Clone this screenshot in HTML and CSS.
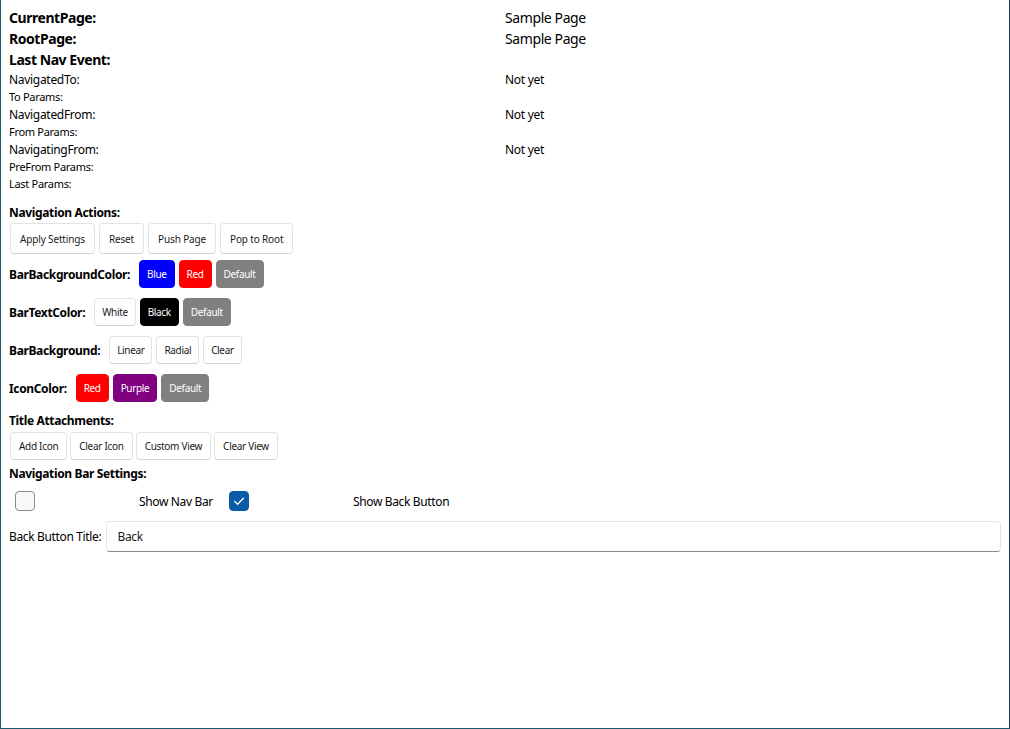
FILE: index.html
```html
<!DOCTYPE html>
<html lang="en">
<head>
<meta charset="utf-8">
<title>Navigation Page Sample</title>
<link rel="stylesheet" href="styles.css">
</head>
<body>
<div class="window">
  <div class="info">
    <div class="big bold">CurrentPage:</div><div class="big">Sample Page</div>
    <div class="big bold">RootPage:</div><div class="big">Sample Page</div>
    <div class="big bold">Last Nav Event:</div><div class="big"></div>
    <div class="mid">NavigatedTo:</div><div class="mid">Not yet</div>
    <div class="small">To Params:</div><div class="small"></div>
    <div class="mid">NavigatedFrom:</div><div class="mid">Not yet</div>
    <div class="small">From Params:</div><div class="small"></div>
    <div class="mid">NavigatingFrom:</div><div class="mid">Not yet</div>
    <div class="small">PreFrom Params:</div><div class="small"></div>
    <div class="small">Last Params:</div><div class="small"></div>
  </div>

  <div class="section-title first">Navigation Actions:</div>
  <div class="btn-row tall">
    <button class="btn">Apply Settings</button>
    <button class="btn">Reset</button>
    <button class="btn">Push Page</button>
    <button class="btn">Pop to Root</button>
  </div>

  <div class="opt-row r1">
    <span class="opt-label">BarBackgroundColor:</span>
    <button class="btn c-blue">Blue</button>
    <button class="btn c-red">Red</button>
    <button class="btn c-gray">Default</button>
  </div>
  <div class="opt-row">
    <span class="opt-label">BarTextColor:</span>
    <button class="btn">White</button>
    <button class="btn c-black">Black</button>
    <button class="btn c-gray">Default</button>
  </div>
  <div class="opt-row">
    <span class="opt-label">BarBackground:</span>
    <button class="btn">Linear</button>
    <button class="btn">Radial</button>
    <button class="btn">Clear</button>
  </div>
  <div class="opt-row">
    <span class="opt-label">IconColor:</span>
    <button class="btn c-red">Red</button>
    <button class="btn c-purple">Purple</button>
    <button class="btn c-gray">Default</button>
  </div>

  <div class="section-title t2">Title Attachments:</div>
  <div class="btn-row short">
    <button class="btn">Add Icon</button>
    <button class="btn">Clear Icon</button>
    <button class="btn">Custom View</button>
    <button class="btn">Clear View</button>
  </div>

  <div class="section-title t3">Navigation Bar Settings:</div>
  <div class="check-row">
    <div class="check-cell"><span class="box"></span></div>
    <span class="check-text">Show Nav Bar</span>
    <div class="check-cell"><span class="box checked"><svg viewBox="0 0 20 20" width="20" height="20"><path d="M5.6 10.4 L8.6 13.3 L14.4 7.2" fill="none" stroke="#fff" stroke-width="1.3" stroke-linecap="round" stroke-linejoin="round"/></svg></span></div>
    <span class="check-text">Show Back Button</span>
  </div>

  <div class="entry-row">
    <span class="entry-label">Back Button Title:</span>
    <div class="entry">Back</div>
  </div>
</div>
</body>
</html>
```

FILE: styles.css
```css
* { box-sizing: border-box; }
html, body { margin: 0; padding: 0; background: #ffffff; }
body {
  font-family: "Noto Sans", "Open Sans", sans-serif;
  color: #000;
}
.window {
  width: 1010px;
  height: 729px;
  border-left: 1px solid #1b5a70;
  border-right: 1px solid #1c3d5e;
  border-bottom: 1px solid #1b5a70;
  padding: 7px 8px 0 8px;
  overflow: hidden;
}
.info {
  display: grid;
  grid-template-columns: 1fr 1fr;
}
.big { font-size: 14px; line-height: 21px; height: 21px; letter-spacing: -0.4px; }
.bold { font-weight: 700; letter-spacing: -0.45px; }
.mid { font-size: 12px; line-height: 18px; height: 18px; letter-spacing: -0.3px; padding-top: 1px; }
.small { font-size: 11px; line-height: 17px; height: 17px; letter-spacing: -0.3px; }

.section-title {
  font-size: 12px;
  font-weight: 700;
  line-height: 17px;
  letter-spacing: -0.35px;
}
.section-title.first { margin-top: 12px; }
.section-title.t2 { margin-top: 10px; }
.section-title.t3 { margin-top: 5px; }

.btn-row { display: flex; gap: 4px; padding-left: 1px; }
.btn-row.tall { margin-top: 2px; }
.btn-row.tall .btn { height: 31px; padding: 0 9px; letter-spacing: -0.15px; }
.btn-row.short { margin-top: 3px; gap: 3px; }
.btn-row.short .btn { height: 28px; font-size: 10px; letter-spacing: -0.3px; padding: 0 8px; }

.btn {
  font-family: "Noto Sans", "Open Sans", sans-serif;
  font-size: 10px;
  letter-spacing: -0.1px;
  height: 28px;
  padding: 0 8px;
  background: #ffffff;
  color: #1a1a1a;
  border: 1px solid #e3e3e3;
  border-bottom-color: #d4d4d4;
  border-radius: 4px;
  margin: 0;
}
.opt-row .btn { padding: 0 7px; letter-spacing: -0.35px; }
.c-blue { background: #0000ff; color: #fff; border-color: #0000ff; }
.c-red { background: #ff0000; color: #fff; border-color: #ff0000; }
.c-gray { background: #808080; color: #fff; border-color: #808080; }
.c-black { background: #000000; color: #fff; border-color: #000000; }
.c-purple { background: #800080; color: #fff; border-color: #800080; }

.opt-row {
  display: flex;
  align-items: center;
  gap: 4px;
  height: 28px;
  margin-top: 10px;
}
.opt-row.r1 { margin-top: 6px; }
.opt-label {
  font-size: 12px;
  font-weight: 700;
  letter-spacing: -0.35px;
  margin-right: 5px;
}

.check-row {
  display: flex;
  align-items: center;
  gap: 10px;
  height: 32px;
  margin-top: 3px;
}
.check-cell {
  width: 120px;
  height: 32px;
  display: flex;
  align-items: center;
  padding-left: 6px;
}
.box {
  width: 20px;
  height: 20px;
  border: 1px solid #8a8a8a;
  border-radius: 4px;
  background: #f8f8f8;
  display: block;
}
.box.checked {
  background: #0a5ca6;
  border-color: #0a5ca6;
}
.box.checked svg { display: block; margin: -1px; }
.check-text { font-size: 12px; letter-spacing: -0.35px; }

.entry-row {
  display: flex;
  align-items: center;
  gap: 5px;
  margin-top: 4px;
}
.entry-label { font-size: 12px; letter-spacing: -0.35px; }
.entry {
  flex: 1;
  height: 31px;
  border: 1px solid #e5e5e5;
  border-bottom: 1px solid #8a8a8a;
  border-radius: 4px;
  padding-left: 10px;
  font-size: 12px;
  letter-spacing: -0.3px;
  line-height: 29px;
  color: #1a1a1a;
}
```
